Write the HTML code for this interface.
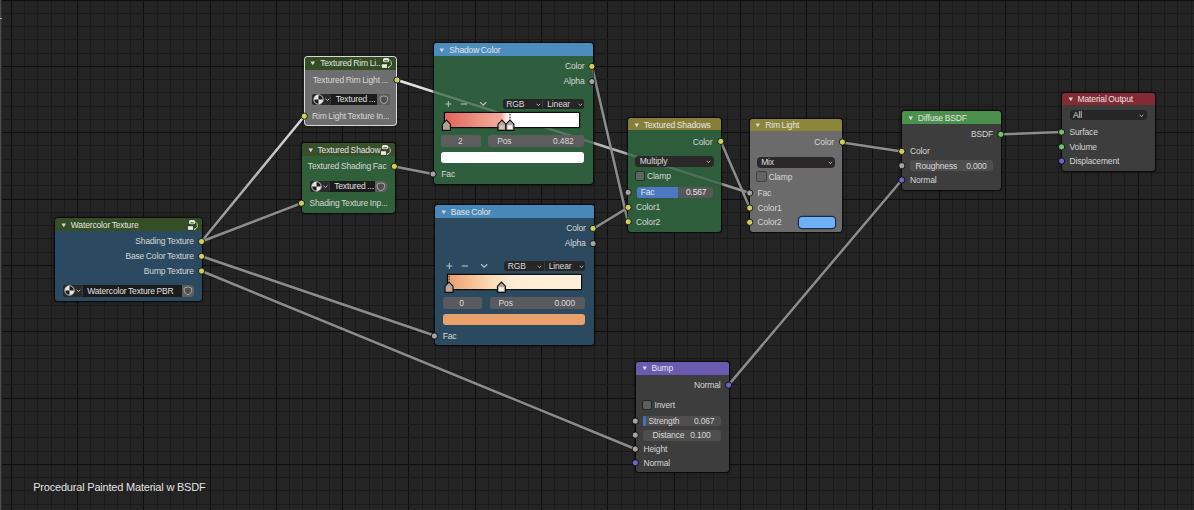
<!DOCTYPE html><html><head><meta charset="utf-8"><style>html,body{margin:0;padding:0;}body{width:1194px;height:510px;overflow:hidden;background:#242424;position:relative;font-family:"Liberation Sans", sans-serif;}</style></head><body>
<svg width="1194" height="510" style="position:absolute;left:0;top:0"><line x1="11.5" y1="0" x2="11.5" y2="510" stroke="#0e0e0e" stroke-width="1"/><line x1="24.5" y1="0" x2="24.5" y2="510" stroke="#1a1a1a" stroke-width="1"/><line x1="37.5" y1="0" x2="37.5" y2="510" stroke="#1a1a1a" stroke-width="1"/><line x1="51.5" y1="0" x2="51.5" y2="510" stroke="#1a1a1a" stroke-width="1"/><line x1="64.5" y1="0" x2="64.5" y2="510" stroke="#1a1a1a" stroke-width="1"/><line x1="77.5" y1="0" x2="77.5" y2="510" stroke="#0e0e0e" stroke-width="1"/><line x1="90.5" y1="0" x2="90.5" y2="510" stroke="#1a1a1a" stroke-width="1"/><line x1="104.5" y1="0" x2="104.5" y2="510" stroke="#1a1a1a" stroke-width="1"/><line x1="117.5" y1="0" x2="117.5" y2="510" stroke="#1a1a1a" stroke-width="1"/><line x1="130.5" y1="0" x2="130.5" y2="510" stroke="#1a1a1a" stroke-width="1"/><line x1="143.5" y1="0" x2="143.5" y2="510" stroke="#0e0e0e" stroke-width="1"/><line x1="157.5" y1="0" x2="157.5" y2="510" stroke="#1a1a1a" stroke-width="1"/><line x1="170.5" y1="0" x2="170.5" y2="510" stroke="#1a1a1a" stroke-width="1"/><line x1="183.5" y1="0" x2="183.5" y2="510" stroke="#1a1a1a" stroke-width="1"/><line x1="196.5" y1="0" x2="196.5" y2="510" stroke="#1a1a1a" stroke-width="1"/><line x1="210.5" y1="0" x2="210.5" y2="510" stroke="#0e0e0e" stroke-width="1"/><line x1="223.5" y1="0" x2="223.5" y2="510" stroke="#1a1a1a" stroke-width="1"/><line x1="236.5" y1="0" x2="236.5" y2="510" stroke="#1a1a1a" stroke-width="1"/><line x1="249.5" y1="0" x2="249.5" y2="510" stroke="#1a1a1a" stroke-width="1"/><line x1="263.5" y1="0" x2="263.5" y2="510" stroke="#1a1a1a" stroke-width="1"/><line x1="276.5" y1="0" x2="276.5" y2="510" stroke="#0e0e0e" stroke-width="1"/><line x1="289.5" y1="0" x2="289.5" y2="510" stroke="#1a1a1a" stroke-width="1"/><line x1="302.5" y1="0" x2="302.5" y2="510" stroke="#1a1a1a" stroke-width="1"/><line x1="316.5" y1="0" x2="316.5" y2="510" stroke="#1a1a1a" stroke-width="1"/><line x1="329.5" y1="0" x2="329.5" y2="510" stroke="#1a1a1a" stroke-width="1"/><line x1="342.5" y1="0" x2="342.5" y2="510" stroke="#0e0e0e" stroke-width="1"/><line x1="355.5" y1="0" x2="355.5" y2="510" stroke="#1a1a1a" stroke-width="1"/><line x1="369.5" y1="0" x2="369.5" y2="510" stroke="#1a1a1a" stroke-width="1"/><line x1="382.5" y1="0" x2="382.5" y2="510" stroke="#1a1a1a" stroke-width="1"/><line x1="395.5" y1="0" x2="395.5" y2="510" stroke="#1a1a1a" stroke-width="1"/><line x1="408.5" y1="0" x2="408.5" y2="510" stroke="#0e0e0e" stroke-width="1"/><line x1="422.5" y1="0" x2="422.5" y2="510" stroke="#1a1a1a" stroke-width="1"/><line x1="435.5" y1="0" x2="435.5" y2="510" stroke="#1a1a1a" stroke-width="1"/><line x1="448.5" y1="0" x2="448.5" y2="510" stroke="#1a1a1a" stroke-width="1"/><line x1="462.5" y1="0" x2="462.5" y2="510" stroke="#1a1a1a" stroke-width="1"/><line x1="475.5" y1="0" x2="475.5" y2="510" stroke="#0e0e0e" stroke-width="1"/><line x1="488.5" y1="0" x2="488.5" y2="510" stroke="#1a1a1a" stroke-width="1"/><line x1="501.5" y1="0" x2="501.5" y2="510" stroke="#1a1a1a" stroke-width="1"/><line x1="515.5" y1="0" x2="515.5" y2="510" stroke="#1a1a1a" stroke-width="1"/><line x1="528.5" y1="0" x2="528.5" y2="510" stroke="#1a1a1a" stroke-width="1"/><line x1="541.5" y1="0" x2="541.5" y2="510" stroke="#0e0e0e" stroke-width="1"/><line x1="554.5" y1="0" x2="554.5" y2="510" stroke="#1a1a1a" stroke-width="1"/><line x1="568.5" y1="0" x2="568.5" y2="510" stroke="#1a1a1a" stroke-width="1"/><line x1="581.5" y1="0" x2="581.5" y2="510" stroke="#1a1a1a" stroke-width="1"/><line x1="594.5" y1="0" x2="594.5" y2="510" stroke="#1a1a1a" stroke-width="1"/><line x1="607.5" y1="0" x2="607.5" y2="510" stroke="#0e0e0e" stroke-width="1"/><line x1="621.5" y1="0" x2="621.5" y2="510" stroke="#1a1a1a" stroke-width="1"/><line x1="634.5" y1="0" x2="634.5" y2="510" stroke="#1a1a1a" stroke-width="1"/><line x1="647.5" y1="0" x2="647.5" y2="510" stroke="#1a1a1a" stroke-width="1"/><line x1="660.5" y1="0" x2="660.5" y2="510" stroke="#1a1a1a" stroke-width="1"/><line x1="674.5" y1="0" x2="674.5" y2="510" stroke="#0e0e0e" stroke-width="1"/><line x1="687.5" y1="0" x2="687.5" y2="510" stroke="#1a1a1a" stroke-width="1"/><line x1="700.5" y1="0" x2="700.5" y2="510" stroke="#1a1a1a" stroke-width="1"/><line x1="713.5" y1="0" x2="713.5" y2="510" stroke="#1a1a1a" stroke-width="1"/><line x1="727.5" y1="0" x2="727.5" y2="510" stroke="#1a1a1a" stroke-width="1"/><line x1="740.5" y1="0" x2="740.5" y2="510" stroke="#0e0e0e" stroke-width="1"/><line x1="753.5" y1="0" x2="753.5" y2="510" stroke="#1a1a1a" stroke-width="1"/><line x1="766.5" y1="0" x2="766.5" y2="510" stroke="#1a1a1a" stroke-width="1"/><line x1="780.5" y1="0" x2="780.5" y2="510" stroke="#1a1a1a" stroke-width="1"/><line x1="793.5" y1="0" x2="793.5" y2="510" stroke="#1a1a1a" stroke-width="1"/><line x1="806.5" y1="0" x2="806.5" y2="510" stroke="#0e0e0e" stroke-width="1"/><line x1="819.5" y1="0" x2="819.5" y2="510" stroke="#1a1a1a" stroke-width="1"/><line x1="833.5" y1="0" x2="833.5" y2="510" stroke="#1a1a1a" stroke-width="1"/><line x1="846.5" y1="0" x2="846.5" y2="510" stroke="#1a1a1a" stroke-width="1"/><line x1="859.5" y1="0" x2="859.5" y2="510" stroke="#1a1a1a" stroke-width="1"/><line x1="872.5" y1="0" x2="872.5" y2="510" stroke="#0e0e0e" stroke-width="1"/><line x1="886.5" y1="0" x2="886.5" y2="510" stroke="#1a1a1a" stroke-width="1"/><line x1="899.5" y1="0" x2="899.5" y2="510" stroke="#1a1a1a" stroke-width="1"/><line x1="912.5" y1="0" x2="912.5" y2="510" stroke="#1a1a1a" stroke-width="1"/><line x1="925.5" y1="0" x2="925.5" y2="510" stroke="#1a1a1a" stroke-width="1"/><line x1="939.5" y1="0" x2="939.5" y2="510" stroke="#0e0e0e" stroke-width="1"/><line x1="952.5" y1="0" x2="952.5" y2="510" stroke="#1a1a1a" stroke-width="1"/><line x1="965.5" y1="0" x2="965.5" y2="510" stroke="#1a1a1a" stroke-width="1"/><line x1="978.5" y1="0" x2="978.5" y2="510" stroke="#1a1a1a" stroke-width="1"/><line x1="992.5" y1="0" x2="992.5" y2="510" stroke="#1a1a1a" stroke-width="1"/><line x1="1005.5" y1="0" x2="1005.5" y2="510" stroke="#0e0e0e" stroke-width="1"/><line x1="1018.5" y1="0" x2="1018.5" y2="510" stroke="#1a1a1a" stroke-width="1"/><line x1="1032.5" y1="0" x2="1032.5" y2="510" stroke="#1a1a1a" stroke-width="1"/><line x1="1045.5" y1="0" x2="1045.5" y2="510" stroke="#1a1a1a" stroke-width="1"/><line x1="1058.5" y1="0" x2="1058.5" y2="510" stroke="#1a1a1a" stroke-width="1"/><line x1="1071.5" y1="0" x2="1071.5" y2="510" stroke="#0e0e0e" stroke-width="1"/><line x1="1085.5" y1="0" x2="1085.5" y2="510" stroke="#1a1a1a" stroke-width="1"/><line x1="1098.5" y1="0" x2="1098.5" y2="510" stroke="#1a1a1a" stroke-width="1"/><line x1="1111.5" y1="0" x2="1111.5" y2="510" stroke="#1a1a1a" stroke-width="1"/><line x1="1124.5" y1="0" x2="1124.5" y2="510" stroke="#1a1a1a" stroke-width="1"/><line x1="1138.5" y1="0" x2="1138.5" y2="510" stroke="#0e0e0e" stroke-width="1"/><line x1="1151.5" y1="0" x2="1151.5" y2="510" stroke="#1a1a1a" stroke-width="1"/><line x1="1164.5" y1="0" x2="1164.5" y2="510" stroke="#1a1a1a" stroke-width="1"/><line x1="1177.5" y1="0" x2="1177.5" y2="510" stroke="#1a1a1a" stroke-width="1"/><line x1="1191.5" y1="0" x2="1191.5" y2="510" stroke="#1a1a1a" stroke-width="1"/><line x1="0" y1="0.5" x2="1194" y2="0.5" stroke="#0e0e0e" stroke-width="1"/><line x1="0" y1="13.5" x2="1194" y2="13.5" stroke="#1a1a1a" stroke-width="1"/><line x1="0" y1="26.5" x2="1194" y2="26.5" stroke="#1a1a1a" stroke-width="1"/><line x1="0" y1="39.5" x2="1194" y2="39.5" stroke="#1a1a1a" stroke-width="1"/><line x1="0" y1="53.5" x2="1194" y2="53.5" stroke="#1a1a1a" stroke-width="1"/><line x1="0" y1="66.5" x2="1194" y2="66.5" stroke="#0e0e0e" stroke-width="1"/><line x1="0" y1="79.5" x2="1194" y2="79.5" stroke="#1a1a1a" stroke-width="1"/><line x1="0" y1="92.5" x2="1194" y2="92.5" stroke="#1a1a1a" stroke-width="1"/><line x1="0" y1="106.5" x2="1194" y2="106.5" stroke="#1a1a1a" stroke-width="1"/><line x1="0" y1="119.5" x2="1194" y2="119.5" stroke="#1a1a1a" stroke-width="1"/><line x1="0" y1="132.5" x2="1194" y2="132.5" stroke="#0e0e0e" stroke-width="1"/><line x1="0" y1="145.5" x2="1194" y2="145.5" stroke="#1a1a1a" stroke-width="1"/><line x1="0" y1="159.5" x2="1194" y2="159.5" stroke="#1a1a1a" stroke-width="1"/><line x1="0" y1="172.5" x2="1194" y2="172.5" stroke="#1a1a1a" stroke-width="1"/><line x1="0" y1="185.5" x2="1194" y2="185.5" stroke="#1a1a1a" stroke-width="1"/><line x1="0" y1="199.5" x2="1194" y2="199.5" stroke="#0e0e0e" stroke-width="1"/><line x1="0" y1="212.5" x2="1194" y2="212.5" stroke="#1a1a1a" stroke-width="1"/><line x1="0" y1="225.5" x2="1194" y2="225.5" stroke="#1a1a1a" stroke-width="1"/><line x1="0" y1="238.5" x2="1194" y2="238.5" stroke="#1a1a1a" stroke-width="1"/><line x1="0" y1="252.5" x2="1194" y2="252.5" stroke="#1a1a1a" stroke-width="1"/><line x1="0" y1="265.5" x2="1194" y2="265.5" stroke="#0e0e0e" stroke-width="1"/><line x1="0" y1="278.5" x2="1194" y2="278.5" stroke="#1a1a1a" stroke-width="1"/><line x1="0" y1="291.5" x2="1194" y2="291.5" stroke="#1a1a1a" stroke-width="1"/><line x1="0" y1="305.5" x2="1194" y2="305.5" stroke="#1a1a1a" stroke-width="1"/><line x1="0" y1="318.5" x2="1194" y2="318.5" stroke="#1a1a1a" stroke-width="1"/><line x1="0" y1="331.5" x2="1194" y2="331.5" stroke="#0e0e0e" stroke-width="1"/><line x1="0" y1="345.5" x2="1194" y2="345.5" stroke="#1a1a1a" stroke-width="1"/><line x1="0" y1="358.5" x2="1194" y2="358.5" stroke="#1a1a1a" stroke-width="1"/><line x1="0" y1="371.5" x2="1194" y2="371.5" stroke="#1a1a1a" stroke-width="1"/><line x1="0" y1="384.5" x2="1194" y2="384.5" stroke="#1a1a1a" stroke-width="1"/><line x1="0" y1="398.5" x2="1194" y2="398.5" stroke="#0e0e0e" stroke-width="1"/><line x1="0" y1="411.5" x2="1194" y2="411.5" stroke="#1a1a1a" stroke-width="1"/><line x1="0" y1="424.5" x2="1194" y2="424.5" stroke="#1a1a1a" stroke-width="1"/><line x1="0" y1="437.5" x2="1194" y2="437.5" stroke="#1a1a1a" stroke-width="1"/><line x1="0" y1="451.5" x2="1194" y2="451.5" stroke="#1a1a1a" stroke-width="1"/><line x1="0" y1="464.5" x2="1194" y2="464.5" stroke="#0e0e0e" stroke-width="1"/><line x1="0" y1="477.5" x2="1194" y2="477.5" stroke="#1a1a1a" stroke-width="1"/><line x1="0" y1="490.5" x2="1194" y2="490.5" stroke="#1a1a1a" stroke-width="1"/><line x1="0" y1="504.5" x2="1194" y2="504.5" stroke="#1a1a1a" stroke-width="1"/></svg>
<div style="position:absolute;left:0px;top:0px;width:1px;height:510px;background:#4c4c4c;border-radius:0px;"></div>
<div style="position:absolute;left:1px;top:0px;width:1px;height:510px;background:#2e2e2e;border-radius:0px;"></div>
<div style="position:absolute;left:0px;top:17.8px;width:1.8px;height:1.6px;background:#a8a8a8;border-radius:0px;"></div>
<svg width="1194" height="510" style="position:absolute;left:0;top:0;opacity:1.0"><defs><linearGradient id="lg1" gradientUnits="userSpaceOnUse" x1="201.5" y1="241.5" x2="304.3" y2="116.2"><stop offset="0" stop-color="#8c8c8c"/><stop offset="1" stop-color="#dcdcdc"/></linearGradient><linearGradient id="lg2" gradientUnits="userSpaceOnUse" x1="397.0" y1="80.0" x2="749.7" y2="193.0"><stop offset="0" stop-color="#e6e6e6"/><stop offset="1" stop-color="#909090"/></linearGradient></defs><line x1="201.5" y1="241.5" x2="304.3" y2="116.2" stroke="#161616" stroke-opacity="0.5" stroke-width="3.6" stroke-linecap="round"/><line x1="201.5" y1="241.5" x2="301.5" y2="203.2" stroke="#161616" stroke-opacity="0.5" stroke-width="3.6" stroke-linecap="round"/><line x1="201.5" y1="256.3" x2="435.0" y2="335.8" stroke="#161616" stroke-opacity="0.5" stroke-width="3.6" stroke-linecap="round"/><line x1="201.5" y1="271.0" x2="635.3" y2="449.0" stroke="#161616" stroke-opacity="0.5" stroke-width="3.6" stroke-linecap="round"/><line x1="397.0" y1="80.0" x2="749.7" y2="193.0" stroke="#161616" stroke-opacity="0.5" stroke-width="3.6" stroke-linecap="round"/><line x1="394.3" y1="166.4" x2="433.0" y2="174.0" stroke="#161616" stroke-opacity="0.5" stroke-width="3.6" stroke-linecap="round"/><line x1="592.0" y1="66.5" x2="627.9" y2="221.8" stroke="#161616" stroke-opacity="0.5" stroke-width="3.6" stroke-linecap="round"/><line x1="594.1" y1="228.2" x2="627.9" y2="207.6" stroke="#161616" stroke-opacity="0.5" stroke-width="3.6" stroke-linecap="round"/><line x1="720.7" y1="141.2" x2="749.7" y2="207.8" stroke="#161616" stroke-opacity="0.5" stroke-width="3.6" stroke-linecap="round"/><line x1="842.4" y1="142.4" x2="901.8" y2="151.4" stroke="#161616" stroke-opacity="0.5" stroke-width="3.6" stroke-linecap="round"/><line x1="1000.8" y1="134.3" x2="1061.6" y2="132.1" stroke="#161616" stroke-opacity="0.5" stroke-width="3.6" stroke-linecap="round"/><line x1="728.4" y1="385.1" x2="901.8" y2="180.0" stroke="#161616" stroke-opacity="0.5" stroke-width="3.6" stroke-linecap="round"/><line x1="201.5" y1="241.5" x2="304.3" y2="116.2" stroke="url(#lg1)" stroke-width="2.5" stroke-linecap="round"/><line x1="201.5" y1="241.5" x2="301.5" y2="203.2" stroke="#8c8c8c" stroke-width="2.5" stroke-linecap="round"/><line x1="201.5" y1="256.3" x2="435.0" y2="335.8" stroke="#8c8c8c" stroke-width="2.5" stroke-linecap="round"/><line x1="201.5" y1="271.0" x2="635.3" y2="449.0" stroke="#8c8c8c" stroke-width="2.5" stroke-linecap="round"/><line x1="397.0" y1="80.0" x2="749.7" y2="193.0" stroke="url(#lg2)" stroke-width="2.5" stroke-linecap="round"/><line x1="394.3" y1="166.4" x2="433.0" y2="174.0" stroke="#8c8c8c" stroke-width="2.5" stroke-linecap="round"/><line x1="592.0" y1="66.5" x2="627.9" y2="221.8" stroke="#8c8c8c" stroke-width="2.5" stroke-linecap="round"/><line x1="594.1" y1="228.2" x2="627.9" y2="207.6" stroke="#8c8c8c" stroke-width="2.5" stroke-linecap="round"/><line x1="720.7" y1="141.2" x2="749.7" y2="207.8" stroke="#8c8c8c" stroke-width="2.5" stroke-linecap="round"/><line x1="842.4" y1="142.4" x2="901.8" y2="151.4" stroke="#8c8c8c" stroke-width="2.5" stroke-linecap="round"/><line x1="1000.8" y1="134.3" x2="1061.6" y2="132.1" stroke="#8c8c8c" stroke-width="2.5" stroke-linecap="round"/><line x1="728.4" y1="385.1" x2="901.8" y2="180.0" stroke="#8c8c8c" stroke-width="2.5" stroke-linecap="round"/></svg>
<div style="position:absolute;left:55.3px;top:218.2px;width:146.7px;height:82.4px;border-radius:3px;overflow:hidden;background:#2b4a61;box-shadow:0 0 0 1px rgba(0,0,0,0.55),0 0 3px 1px rgba(0,0,0,0.4);"><div style="position:absolute;left:0;top:0;right:0;height:12.8px;background:#354e26;"></div></div>
<div style="position:absolute;left:304.7px;top:56.6px;width:91.5px;height:68.7px;border-radius:3px;overflow:hidden;background:#6e6e6e;box-shadow:0 0 0 1px #d8d8d8,0 0 3px 1px rgba(0,0,0,0.45);"><div style="position:absolute;left:0;top:0;right:0;height:13px;background:#344d25;"></div></div>
<div style="position:absolute;left:302px;top:143.2px;width:93px;height:69.4px;border-radius:3px;overflow:hidden;background:#2f6039;box-shadow:0 0 0 1px rgba(0,0,0,0.55),0 0 3px 1px rgba(0,0,0,0.4);"><div style="position:absolute;left:0;top:0;right:0;height:12.8px;background:#384f2a;"></div></div>
<div style="position:absolute;left:433.8px;top:43.2px;width:159.2px;height:140.4px;border-radius:3px;overflow:hidden;background:#2e5e3d;box-shadow:0 0 0 1px rgba(0,0,0,0.55),0 0 3px 1px rgba(0,0,0,0.4);"><div style="position:absolute;left:0;top:0;right:0;height:12.6px;background:#4d8dbe;"></div></div>
<div style="position:absolute;left:435.2px;top:205.2px;width:159px;height:140.2px;border-radius:3px;overflow:hidden;background:#2c4a5f;box-shadow:0 0 0 1px rgba(0,0,0,0.55),0 0 3px 1px rgba(0,0,0,0.4);"><div style="position:absolute;left:0;top:0;right:0;height:12.8px;background:#4888b9;"></div></div>
<div style="position:absolute;left:628.2px;top:118.3px;width:92.6px;height:113.3px;border-radius:3px;overflow:hidden;background:#2e5d3b;box-shadow:0 0 0 1px rgba(0,0,0,0.55),0 0 3px 1px rgba(0,0,0,0.4);"><div style="position:absolute;left:0;top:0;right:0;height:12.2px;background:#877f38;"></div></div>
<div style="position:absolute;left:749.7px;top:118.9px;width:92.7px;height:112.9px;border-radius:3px;overflow:hidden;background:#6b6b6b;box-shadow:0 0 0 1px rgba(0,0,0,0.55),0 0 3px 1px rgba(0,0,0,0.4);"><div style="position:absolute;left:0;top:0;right:0;height:12.2px;background:#8c8438;"></div></div>
<div style="position:absolute;left:902.2px;top:111.2px;width:98.8px;height:78.6px;border-radius:3px;overflow:hidden;background:#3d3d3d;box-shadow:0 0 0 1px rgba(0,0,0,0.55),0 0 3px 1px rgba(0,0,0,0.4);"><div style="position:absolute;left:0;top:0;right:0;height:12.7px;background:#4b904d;"></div></div>
<div style="position:absolute;left:1062.1px;top:92.5px;width:92.8px;height:78.6px;border-radius:3px;overflow:hidden;background:#3d3d3d;box-shadow:0 0 0 1px rgba(0,0,0,0.55),0 0 3px 1px rgba(0,0,0,0.4);"><div style="position:absolute;left:0;top:0;right:0;height:12.6px;background:#842a33;"></div></div>
<div style="position:absolute;left:636px;top:361.9px;width:93.1px;height:110.2px;border-radius:3px;overflow:hidden;background:#3d3d3d;box-shadow:0 0 0 1px rgba(0,0,0,0.55),0 0 3px 1px rgba(0,0,0,0.4);"><div style="position:absolute;left:0;top:0;right:0;height:12.7px;background:#6a5bb0;"></div></div>
<svg width="1194" height="510" style="position:absolute;left:0;top:0;opacity:0.28"><defs><linearGradient id="lg3" gradientUnits="userSpaceOnUse" x1="201.5" y1="241.5" x2="304.3" y2="116.2"><stop offset="0" stop-color="#8c8c8c"/><stop offset="1" stop-color="#dcdcdc"/></linearGradient><linearGradient id="lg4" gradientUnits="userSpaceOnUse" x1="397.0" y1="80.0" x2="749.7" y2="193.0"><stop offset="0" stop-color="#e6e6e6"/><stop offset="1" stop-color="#909090"/></linearGradient></defs><line x1="201.5" y1="241.5" x2="304.3" y2="116.2" stroke="#161616" stroke-opacity="0.5" stroke-width="3.6" stroke-linecap="round"/><line x1="201.5" y1="241.5" x2="301.5" y2="203.2" stroke="#161616" stroke-opacity="0.5" stroke-width="3.6" stroke-linecap="round"/><line x1="201.5" y1="256.3" x2="435.0" y2="335.8" stroke="#161616" stroke-opacity="0.5" stroke-width="3.6" stroke-linecap="round"/><line x1="201.5" y1="271.0" x2="635.3" y2="449.0" stroke="#161616" stroke-opacity="0.5" stroke-width="3.6" stroke-linecap="round"/><line x1="397.0" y1="80.0" x2="749.7" y2="193.0" stroke="#161616" stroke-opacity="0.5" stroke-width="3.6" stroke-linecap="round"/><line x1="394.3" y1="166.4" x2="433.0" y2="174.0" stroke="#161616" stroke-opacity="0.5" stroke-width="3.6" stroke-linecap="round"/><line x1="592.0" y1="66.5" x2="627.9" y2="221.8" stroke="#161616" stroke-opacity="0.5" stroke-width="3.6" stroke-linecap="round"/><line x1="594.1" y1="228.2" x2="627.9" y2="207.6" stroke="#161616" stroke-opacity="0.5" stroke-width="3.6" stroke-linecap="round"/><line x1="720.7" y1="141.2" x2="749.7" y2="207.8" stroke="#161616" stroke-opacity="0.5" stroke-width="3.6" stroke-linecap="round"/><line x1="842.4" y1="142.4" x2="901.8" y2="151.4" stroke="#161616" stroke-opacity="0.5" stroke-width="3.6" stroke-linecap="round"/><line x1="1000.8" y1="134.3" x2="1061.6" y2="132.1" stroke="#161616" stroke-opacity="0.5" stroke-width="3.6" stroke-linecap="round"/><line x1="728.4" y1="385.1" x2="901.8" y2="180.0" stroke="#161616" stroke-opacity="0.5" stroke-width="3.6" stroke-linecap="round"/><line x1="201.5" y1="241.5" x2="304.3" y2="116.2" stroke="url(#lg3)" stroke-width="2.5" stroke-linecap="round"/><line x1="201.5" y1="241.5" x2="301.5" y2="203.2" stroke="#8c8c8c" stroke-width="2.5" stroke-linecap="round"/><line x1="201.5" y1="256.3" x2="435.0" y2="335.8" stroke="#8c8c8c" stroke-width="2.5" stroke-linecap="round"/><line x1="201.5" y1="271.0" x2="635.3" y2="449.0" stroke="#8c8c8c" stroke-width="2.5" stroke-linecap="round"/><line x1="397.0" y1="80.0" x2="749.7" y2="193.0" stroke="url(#lg4)" stroke-width="2.5" stroke-linecap="round"/><line x1="394.3" y1="166.4" x2="433.0" y2="174.0" stroke="#8c8c8c" stroke-width="2.5" stroke-linecap="round"/><line x1="592.0" y1="66.5" x2="627.9" y2="221.8" stroke="#8c8c8c" stroke-width="2.5" stroke-linecap="round"/><line x1="594.1" y1="228.2" x2="627.9" y2="207.6" stroke="#8c8c8c" stroke-width="2.5" stroke-linecap="round"/><line x1="720.7" y1="141.2" x2="749.7" y2="207.8" stroke="#8c8c8c" stroke-width="2.5" stroke-linecap="round"/><line x1="842.4" y1="142.4" x2="901.8" y2="151.4" stroke="#8c8c8c" stroke-width="2.5" stroke-linecap="round"/><line x1="1000.8" y1="134.3" x2="1061.6" y2="132.1" stroke="#8c8c8c" stroke-width="2.5" stroke-linecap="round"/><line x1="728.4" y1="385.1" x2="901.8" y2="180.0" stroke="#8c8c8c" stroke-width="2.5" stroke-linecap="round"/></svg>
<svg style="position:absolute;left:60.8px;top:222.5px" width="6" height="5"><path d="M0.5 0.5 L5 0.5 L2.75 4.2 Z" fill="#d8d8d8"/></svg>
<div style="position:absolute;left:70.8px;top:218.5px;height:12px;line-height:12px;font-size:8.5px;letter-spacing:-0.15px;word-spacing:-0.5px;color:#e4e4e4;white-space:nowrap;">Watercolor Texture</div>
<svg style="position:absolute;left:187px;top:219px" width="13" height="13"><g stroke="#1c2418" stroke-width="1.4" stroke-opacity="0.55" fill="none"><rect x="1.9" y="1.1" width="6.3" height="4.1" rx="1.6"/><rect x="0.9" y="7.2" width="5.1" height="3.7"/><path d="M8.2 2.4 Q10.9 4.4 10.4 7.6 Q9.8 9.6 7.4 10.2"/></g><rect x="1.9" y="1.1" width="6.3" height="4.1" rx="1.6" fill="#e2ead8"/><rect x="3.3" y="3.4" width="3.5" height="0.9" fill="#2a3326"/><rect x="0.9" y="7.2" width="5.1" height="3.7" fill="#e2ead8"/><path d="M8.2 2.4 Q10.9 4.4 10.4 7.6 Q9.8 9.6 7.4 10.2" stroke="#dfe6d6" stroke-width="0.9" fill="none"/><path d="M6.8 9.2 L8.4 10.3 L7 11.2 Z" fill="#dfe6d6"/></svg>
<svg style="position:absolute;left:310.2px;top:60.9px" width="6" height="5"><path d="M0.5 0.5 L5 0.5 L2.75 4.2 Z" fill="#d8d8d8"/></svg>
<div style="position:absolute;left:320.2px;top:56.9px;height:12px;line-height:12px;font-size:8.5px;letter-spacing:-0.15px;word-spacing:-0.5px;color:#e4e4e4;white-space:nowrap;">Textured Rim Li...</div>
<svg style="position:absolute;left:381.2px;top:57.4px" width="13" height="13"><g stroke="#1c2418" stroke-width="1.4" stroke-opacity="0.55" fill="none"><rect x="1.9" y="1.1" width="6.3" height="4.1" rx="1.6"/><rect x="0.9" y="7.2" width="5.1" height="3.7"/><path d="M8.2 2.4 Q10.9 4.4 10.4 7.6 Q9.8 9.6 7.4 10.2"/></g><rect x="1.9" y="1.1" width="6.3" height="4.1" rx="1.6" fill="#e2ead8"/><rect x="3.3" y="3.4" width="3.5" height="0.9" fill="#2a3326"/><rect x="0.9" y="7.2" width="5.1" height="3.7" fill="#e2ead8"/><path d="M8.2 2.4 Q10.9 4.4 10.4 7.6 Q9.8 9.6 7.4 10.2" stroke="#dfe6d6" stroke-width="0.9" fill="none"/><path d="M6.8 9.2 L8.4 10.3 L7 11.2 Z" fill="#dfe6d6"/></svg>
<svg style="position:absolute;left:307.5px;top:147.5px" width="6" height="5"><path d="M0.5 0.5 L5 0.5 L2.75 4.2 Z" fill="#d8d8d8"/></svg>
<div style="position:absolute;left:317.5px;top:143.5px;height:12px;line-height:12px;font-size:8.5px;letter-spacing:-0.15px;word-spacing:-0.5px;color:#e4e4e4;white-space:nowrap;">Textured Shadow</div>
<svg style="position:absolute;left:380px;top:144px" width="13" height="13"><g stroke="#1c2418" stroke-width="1.4" stroke-opacity="0.55" fill="none"><rect x="1.9" y="1.1" width="6.3" height="4.1" rx="1.6"/><rect x="0.9" y="7.2" width="5.1" height="3.7"/><path d="M8.2 2.4 Q10.9 4.4 10.4 7.6 Q9.8 9.6 7.4 10.2"/></g><rect x="1.9" y="1.1" width="6.3" height="4.1" rx="1.6" fill="#e2ead8"/><rect x="3.3" y="3.4" width="3.5" height="0.9" fill="#2a3326"/><rect x="0.9" y="7.2" width="5.1" height="3.7" fill="#e2ead8"/><path d="M8.2 2.4 Q10.9 4.4 10.4 7.6 Q9.8 9.6 7.4 10.2" stroke="#dfe6d6" stroke-width="0.9" fill="none"/><path d="M6.8 9.2 L8.4 10.3 L7 11.2 Z" fill="#dfe6d6"/></svg>
<svg style="position:absolute;left:439.3px;top:47.5px" width="6" height="5"><path d="M0.5 0.5 L5 0.5 L2.75 4.2 Z" fill="#d8d8d8"/></svg>
<div style="position:absolute;left:449.3px;top:43.5px;height:12px;line-height:12px;font-size:8.5px;letter-spacing:-0.15px;word-spacing:-0.5px;color:#e4e4e4;white-space:nowrap;">Shadow Color</div>
<svg style="position:absolute;left:440.7px;top:209.5px" width="6" height="5"><path d="M0.5 0.5 L5 0.5 L2.75 4.2 Z" fill="#d8d8d8"/></svg>
<div style="position:absolute;left:450.7px;top:205.5px;height:12px;line-height:12px;font-size:8.5px;letter-spacing:-0.15px;word-spacing:-0.5px;color:#e4e4e4;white-space:nowrap;">Base Color</div>
<svg style="position:absolute;left:633.7px;top:122.6px" width="6" height="5"><path d="M0.5 0.5 L5 0.5 L2.75 4.2 Z" fill="#d8d8d8"/></svg>
<div style="position:absolute;left:643.7px;top:118.6px;height:12px;line-height:12px;font-size:8.5px;letter-spacing:-0.15px;word-spacing:-0.5px;color:#e4e4e4;white-space:nowrap;">Textured Shadows</div>
<svg style="position:absolute;left:755.2px;top:123.2px" width="6" height="5"><path d="M0.5 0.5 L5 0.5 L2.75 4.2 Z" fill="#d8d8d8"/></svg>
<div style="position:absolute;left:765.2px;top:119.2px;height:12px;line-height:12px;font-size:8.5px;letter-spacing:-0.15px;word-spacing:-0.5px;color:#e4e4e4;white-space:nowrap;">Rim Light</div>
<svg style="position:absolute;left:907.7px;top:115.5px" width="6" height="5"><path d="M0.5 0.5 L5 0.5 L2.75 4.2 Z" fill="#d8d8d8"/></svg>
<div style="position:absolute;left:917.7px;top:111.5px;height:12px;line-height:12px;font-size:8.5px;letter-spacing:-0.15px;word-spacing:-0.5px;color:#e4e4e4;white-space:nowrap;">Diffuse BSDF</div>
<svg style="position:absolute;left:1067.6px;top:96.8px" width="6" height="5"><path d="M0.5 0.5 L5 0.5 L2.75 4.2 Z" fill="#d8d8d8"/></svg>
<div style="position:absolute;left:1077.6px;top:92.8px;height:12px;line-height:12px;font-size:8.5px;letter-spacing:-0.15px;word-spacing:-0.5px;color:#e4e4e4;white-space:nowrap;">Material Output</div>
<svg style="position:absolute;left:641.5px;top:366.2px" width="6" height="5"><path d="M0.5 0.5 L5 0.5 L2.75 4.2 Z" fill="#d8d8d8"/></svg>
<div style="position:absolute;left:651.5px;top:362.2px;height:12px;line-height:12px;font-size:8.5px;letter-spacing:-0.15px;word-spacing:-0.5px;color:#e4e4e4;white-space:nowrap;">Bump</div>
<div style="position:absolute;right:1000.2px;top:235.3px;height:12px;line-height:12px;font-size:8.5px;letter-spacing:-0.15px;word-spacing:-0.5px;color:#d6d6d6;white-space:nowrap;">Shading Texture</div>
<div style="position:absolute;right:1000.2px;top:250px;height:12px;line-height:12px;font-size:8.5px;letter-spacing:-0.15px;word-spacing:-0.5px;color:#d6d6d6;white-space:nowrap;">Base Color Texture</div>
<div style="position:absolute;right:1000.2px;top:264.7px;height:12px;line-height:12px;font-size:8.5px;letter-spacing:-0.15px;word-spacing:-0.5px;color:#d6d6d6;white-space:nowrap;">Bump Texture</div>
<div style="position:absolute;left:63px;top:285px;width:131px;height:11.8px;background:#1b1b1b;border-radius:3px;"></div>
<div style="position:absolute;left:63px;top:285px;width:18.8px;height:11.8px;background:#2a2a2a;border-radius:3px;border-radius:3px 0 0 3px;"></div>
<div style="position:absolute;left:81.8px;top:285.5px;width:0.7px;height:10.8px;background:#3a3a3a;border-radius:0px;"></div>
<div style="position:absolute;left:181.8px;top:285px;width:12.2px;height:11.8px;background:#5e5e5e;border-radius:3px;border-radius:0 3px 3px 0;"></div>
<svg style="position:absolute;left:64px;top:285.4px" width="18" height="11"><circle cx="5.5" cy="5.5" r="4.7" fill="#e6e6e6"/><path d="M5.5 5.5 L5.5 0.8 A4.7 4.7 0 0 1 10.2 5.5 Z" fill="#1c1c1c"/><path d="M5.5 5.5 L0.8 5.5 A4.7 4.7 0 0 0 5.5 10.2 Z" fill="#1c1c1c"/><circle cx="5.5" cy="5.5" r="4.7" fill="none" stroke="#d8d8d8" stroke-width="0.8"/><path d="M12.4 4.6 L14.4 6.6 L16.4 4.6" stroke="#c8c8c8" stroke-width="0.9" fill="none"/></svg>
<div style="position:absolute;left:87.2px;top:284.7px;height:12px;line-height:12px;font-size:8.5px;letter-spacing:-0.15px;word-spacing:-0.5px;color:#e0e0e0;white-space:nowrap;">Watercolor Texture PBR</div>
<svg style="position:absolute;left:183.2px;top:286.1px" width="10" height="10"><path d="M4.9 0.9 L8.6 2.1 L8.6 4.8 Q8.2 7.8 4.9 8.9 Q1.6 7.8 1.2 4.8 L1.2 2.1 Z" fill="#505050" stroke="#b8b8b8" stroke-width="0.8"/></svg>
<div style="position:absolute;right:805.8px;top:74px;height:12px;line-height:12px;font-size:8.5px;letter-spacing:-0.15px;word-spacing:-0.5px;color:#d6d6d6;white-space:nowrap;">Textured Rim Light ...</div>
<div style="position:absolute;left:311.5px;top:94px;width:78.1px;height:10.6px;background:#1b1b1b;border-radius:3px;"></div>
<div style="position:absolute;left:311.5px;top:94px;width:18.8px;height:10.6px;background:#2a2a2a;border-radius:3px;border-radius:3px 0 0 3px;"></div>
<div style="position:absolute;left:330.3px;top:94.5px;width:0.7px;height:9.6px;background:#3a3a3a;border-radius:0px;"></div>
<div style="position:absolute;left:377.4px;top:94px;width:12.2px;height:10.6px;background:#5e5e5e;border-radius:3px;border-radius:0 3px 3px 0;"></div>
<svg style="position:absolute;left:312.5px;top:93.8px" width="18" height="11"><circle cx="5.5" cy="5.5" r="4.7" fill="#e6e6e6"/><path d="M5.5 5.5 L5.5 0.8 A4.7 4.7 0 0 1 10.2 5.5 Z" fill="#1c1c1c"/><path d="M5.5 5.5 L0.8 5.5 A4.7 4.7 0 0 0 5.5 10.2 Z" fill="#1c1c1c"/><circle cx="5.5" cy="5.5" r="4.7" fill="none" stroke="#d8d8d8" stroke-width="0.8"/><path d="M12.4 4.6 L14.4 6.6 L16.4 4.6" stroke="#c8c8c8" stroke-width="0.9" fill="none"/></svg>
<div style="position:absolute;left:335.7px;top:93.1px;height:12px;line-height:12px;font-size:8.5px;letter-spacing:-0.15px;word-spacing:-0.5px;color:#e0e0e0;white-space:nowrap;">Textured ...</div>
<svg style="position:absolute;left:378.8px;top:94.5px" width="10" height="10"><path d="M4.9 0.9 L8.6 2.1 L8.6 4.8 Q8.2 7.8 4.9 8.9 Q1.6 7.8 1.2 4.8 L1.2 2.1 Z" fill="#505050" stroke="#b8b8b8" stroke-width="0.8"/></svg>
<div style="position:absolute;left:312px;top:110px;height:12px;line-height:12px;font-size:8.5px;letter-spacing:-0.15px;word-spacing:-0.5px;color:#d6d6d6;white-space:nowrap;">Rim Light Texture In...</div>
<div style="position:absolute;right:807.5px;top:160.2px;height:12px;line-height:12px;font-size:8.5px;letter-spacing:-0.15px;word-spacing:-0.5px;color:#d6d6d6;white-space:nowrap;">Textured Shading Fac</div>
<div style="position:absolute;left:310px;top:181.3px;width:76.8px;height:10.3px;background:#1b1b1b;border-radius:3px;"></div>
<div style="position:absolute;left:310px;top:181.3px;width:18.8px;height:10.3px;background:#2a2a2a;border-radius:3px;border-radius:3px 0 0 3px;"></div>
<div style="position:absolute;left:328.8px;top:181.8px;width:0.7px;height:9.3px;background:#3a3a3a;border-radius:0px;"></div>
<div style="position:absolute;left:374.6px;top:181.3px;width:12.2px;height:10.3px;background:#5e5e5e;border-radius:3px;border-radius:0 3px 3px 0;"></div>
<svg style="position:absolute;left:311px;top:180.95px" width="18" height="11"><circle cx="5.5" cy="5.5" r="4.7" fill="#e6e6e6"/><path d="M5.5 5.5 L5.5 0.8 A4.7 4.7 0 0 1 10.2 5.5 Z" fill="#1c1c1c"/><path d="M5.5 5.5 L0.8 5.5 A4.7 4.7 0 0 0 5.5 10.2 Z" fill="#1c1c1c"/><circle cx="5.5" cy="5.5" r="4.7" fill="none" stroke="#d8d8d8" stroke-width="0.8"/><path d="M12.4 4.6 L14.4 6.6 L16.4 4.6" stroke="#c8c8c8" stroke-width="0.9" fill="none"/></svg>
<div style="position:absolute;left:334.2px;top:180.25px;height:12px;line-height:12px;font-size:8.5px;letter-spacing:-0.15px;word-spacing:-0.5px;color:#e0e0e0;white-space:nowrap;">Textured ...</div>
<svg style="position:absolute;left:376px;top:181.65px" width="10" height="10"><path d="M4.9 0.9 L8.6 2.1 L8.6 4.8 Q8.2 7.8 4.9 8.9 Q1.6 7.8 1.2 4.8 L1.2 2.1 Z" fill="#505050" stroke="#b8b8b8" stroke-width="0.8"/></svg>
<div style="position:absolute;left:309.5px;top:197px;height:12px;line-height:12px;font-size:8.5px;letter-spacing:-0.15px;word-spacing:-0.5px;color:#d6d6d6;white-space:nowrap;">Shading Texture Inp...</div>
<div style="position:absolute;right:609.5px;top:60.2px;height:12px;line-height:12px;font-size:8.5px;letter-spacing:-0.15px;word-spacing:-0.5px;color:#d6d6d6;white-space:nowrap;">Color</div>
<div style="position:absolute;right:609.5px;top:75.4px;height:12px;line-height:12px;font-size:8.5px;letter-spacing:-0.15px;word-spacing:-0.5px;color:#d6d6d6;white-space:nowrap;">Alpha</div>
<svg style="position:absolute;left:443.8px;top:100.1px" width="50" height="8"><path d="M1.3 4 H7.3 M4.3 1 V7" stroke="#b4c2c0" stroke-width="1"/><path d="M16.7 4 H23" stroke="#b4c2c0" stroke-width="1.1"/><path d="M36.2 2.2 L39.2 5.2 L42.2 2.2" stroke="#b4c2c0" stroke-width="1.3" fill="none"/></svg>
<div style="position:absolute;left:503px;top:99.2px;width:39.4px;height:10px;background:#262626;border-radius:3px;"></div>
<div style="position:absolute;left:543px;top:99.2px;width:41.1px;height:10px;background:#262626;border-radius:3px;"></div>
<div style="position:absolute;left:538.8px;top:99.2px;width:8px;height:10px;background:#262626;border-radius:0px;"></div>
<div style="position:absolute;left:542.4px;top:99.7px;width:0.6px;height:9px;background:#3a3a3a;border-radius:0px;"></div>
<div style="position:absolute;left:506.3px;top:97.9px;height:12px;line-height:12px;font-size:8.5px;letter-spacing:-0.15px;word-spacing:-0.5px;color:#d8d8d8;white-space:nowrap;">RGB</div>
<div style="position:absolute;left:547.3px;top:97.9px;height:12px;line-height:12px;font-size:8.5px;letter-spacing:-0.15px;word-spacing:-0.5px;color:#d8d8d8;white-space:nowrap;">Linear</div>
<svg style="position:absolute;left:535.8px;top:103.2px" width="5" height="4"><path d="M0.6 0.8 L2.4 2.6 L4.2 0.8" stroke="#cfcfcf" stroke-width="0.8" fill="none"/></svg>
<svg style="position:absolute;left:577.8px;top:103.2px" width="5" height="4"><path d="M0.6 0.8 L2.4 2.6 L4.2 0.8" stroke="#cfcfcf" stroke-width="0.8" fill="none"/></svg>
<div style="position:absolute;left:445.2px;top:113.4px;width:134.3px;height:14px;background:linear-gradient(to right,#e2665c 1.5%,#ef9484 26%,#f5aa9a 42%,#fde6e2 45.5%,#ffffff 48.5%,#ffffff 100%);box-shadow:0 0 0 1.2px #0c0c0c;"></div>
<svg width="1194" height="510" style="position:absolute;left:0;top:0"><path d="M442.4 130.4 L442.4 124.1 L446.4 120 L450.4 124.1 L450.4 130.4 Z" fill="#b0a29e" stroke="#0e0e0e" stroke-width="1.1"/><rect x="443.9" y="125.2" width="5" height="4" fill="#b49f9b"/><path d="M497.93 130.4 L497.93 124.1 L501.93 120 L505.93 124.1 L505.93 130.4 Z" fill="#b0a29e" stroke="#0e0e0e" stroke-width="1.1"/><rect x="499.43" y="125.2" width="5" height="4" fill="#d8c0ba"/><path d="M505.98 130.4 L505.98 124.1 L509.98 120 L513.98 124.1 L513.98 130.4 Z" fill="#b0a29e" stroke="#0e0e0e" stroke-width="1.1"/><rect x="507.48" y="125.2" width="5" height="4" fill="#f4f4f4"/><path d="M509.98 113.9 V119.9" stroke="#0e0e0e" stroke-width="1" stroke-dasharray="1.6 1.2"/></svg>
<div style="position:absolute;left:441.4px;top:135.1px;width:39.2px;height:11.5px;background:#5c5d5c;border-radius:2.5px;"></div>
<div style="position:absolute;left:488.4px;top:135.1px;width:95.7px;height:11.5px;background:#5c5d5c;border-radius:2.5px;"></div>
<div style="position:absolute;left:360.2px;width:200px;text-align:center;top:134.85px;height:12px;line-height:12px;font-size:8.5px;letter-spacing:-0.15px;word-spacing:-0.5px;color:#d8d8d8;white-space:nowrap;">2</div>
<div style="position:absolute;left:497.2px;top:134.85px;height:12px;line-height:12px;font-size:8.5px;letter-spacing:-0.15px;word-spacing:-0.5px;color:#d8d8d8;white-space:nowrap;">Pos</div>
<div style="position:absolute;right:620.4px;top:134.85px;height:12px;line-height:12px;font-size:8.5px;letter-spacing:-0.15px;word-spacing:-0.5px;color:#d8d8d8;white-space:nowrap;">0.482</div>
<div style="position:absolute;left:441.4px;top:151.8px;width:142.7px;height:11.3px;background:#ffffff;border-radius:3px;"></div>
<div style="position:absolute;left:441.3px;top:167.9px;height:12px;line-height:12px;font-size:8.5px;letter-spacing:-0.15px;word-spacing:-0.5px;color:#d6d6d6;white-space:nowrap;">Fac</div>
<div style="position:absolute;right:608.3px;top:222.2px;height:12px;line-height:12px;font-size:8.5px;letter-spacing:-0.15px;word-spacing:-0.5px;color:#d6d6d6;white-space:nowrap;">Color</div>
<div style="position:absolute;right:608.3px;top:237.4px;height:12px;line-height:12px;font-size:8.5px;letter-spacing:-0.15px;word-spacing:-0.5px;color:#d6d6d6;white-space:nowrap;">Alpha</div>
<svg style="position:absolute;left:445.2px;top:262.1px" width="50" height="8"><path d="M1.3 4 H7.3 M4.3 1 V7" stroke="#b4c2c0" stroke-width="1"/><path d="M16.7 4 H23" stroke="#b4c2c0" stroke-width="1.1"/><path d="M36.2 2.2 L39.2 5.2 L42.2 2.2" stroke="#b4c2c0" stroke-width="1.3" fill="none"/></svg>
<div style="position:absolute;left:504.4px;top:261.2px;width:39.4px;height:10px;background:#262626;border-radius:3px;"></div>
<div style="position:absolute;left:544.4px;top:261.2px;width:41.1px;height:10px;background:#262626;border-radius:3px;"></div>
<div style="position:absolute;left:540.2px;top:261.2px;width:8px;height:10px;background:#262626;border-radius:0px;"></div>
<div style="position:absolute;left:543.8px;top:261.7px;width:0.6px;height:9px;background:#3a3a3a;border-radius:0px;"></div>
<div style="position:absolute;left:507.7px;top:259.9px;height:12px;line-height:12px;font-size:8.5px;letter-spacing:-0.15px;word-spacing:-0.5px;color:#d8d8d8;white-space:nowrap;">RGB</div>
<div style="position:absolute;left:548.7px;top:259.9px;height:12px;line-height:12px;font-size:8.5px;letter-spacing:-0.15px;word-spacing:-0.5px;color:#d8d8d8;white-space:nowrap;">Linear</div>
<svg style="position:absolute;left:537.2px;top:265.2px" width="5" height="4"><path d="M0.6 0.8 L2.4 2.6 L4.2 0.8" stroke="#cfcfcf" stroke-width="0.8" fill="none"/></svg>
<svg style="position:absolute;left:579.2px;top:265.2px" width="5" height="4"><path d="M0.6 0.8 L2.4 2.6 L4.2 0.8" stroke="#cfcfcf" stroke-width="0.8" fill="none"/></svg>
<div style="position:absolute;left:447.8px;top:275.4px;width:133.5px;height:14px;background:linear-gradient(to right,#eda070 1%,#f5bb8e 15%,#fcdcb8 33%,#feedd4 50%,#fdf0d8 100%);box-shadow:0 0 0 1.2px #0c0c0c;"></div>
<svg width="1194" height="510" style="position:absolute;left:0;top:0"><path d="M445 292.4 L445 286.1 L449 282 L453 286.1 L453 292.4 Z" fill="#b0a29e" stroke="#0e0e0e" stroke-width="1.1"/><rect x="446.5" y="287.2" width="5" height="4" fill="#dca084"/><path d="M449 275.9 V281.9" stroke="#0e0e0e" stroke-width="1" stroke-dasharray="1.6 1.2"/><path d="M497.44 292.4 L497.44 286.1 L501.44 282 L505.44 286.1 L505.44 292.4 Z" fill="#b0a29e" stroke="#0e0e0e" stroke-width="1.1"/><rect x="498.94" y="287.2" width="5" height="4" fill="#f6f0e8"/></svg>
<div style="position:absolute;left:442.8px;top:297.1px;width:39.2px;height:11.5px;background:#585a5d;border-radius:2.5px;"></div>
<div style="position:absolute;left:489.8px;top:297.1px;width:95.7px;height:11.5px;background:#585a5d;border-radius:2.5px;"></div>
<div style="position:absolute;left:361.6px;width:200px;text-align:center;top:296.85px;height:12px;line-height:12px;font-size:8.5px;letter-spacing:-0.15px;word-spacing:-0.5px;color:#d8d8d8;white-space:nowrap;">0</div>
<div style="position:absolute;left:498.6px;top:296.85px;height:12px;line-height:12px;font-size:8.5px;letter-spacing:-0.15px;word-spacing:-0.5px;color:#d8d8d8;white-space:nowrap;">Pos</div>
<div style="position:absolute;right:619px;top:296.85px;height:12px;line-height:12px;font-size:8.5px;letter-spacing:-0.15px;word-spacing:-0.5px;color:#d8d8d8;white-space:nowrap;">0.000</div>
<div style="position:absolute;left:442.8px;top:313.8px;width:142.7px;height:11.3px;background:#e9a06a;border-radius:3px;"></div>
<div style="position:absolute;left:442.7px;top:329.9px;height:12px;line-height:12px;font-size:8.5px;letter-spacing:-0.15px;word-spacing:-0.5px;color:#d6d6d6;white-space:nowrap;">Fac</div>
<div style="position:absolute;right:481.7px;top:135.5px;height:12px;line-height:12px;font-size:8.5px;letter-spacing:-0.15px;word-spacing:-0.5px;color:#d6d6d6;white-space:nowrap;">Color</div>
<div style="position:absolute;left:635.4px;top:156.3px;width:78.2px;height:11px;background:#2a2828;border-radius:4px;"></div>
<div style="position:absolute;left:639.7px;top:155.4px;height:12px;line-height:12px;font-size:8.5px;letter-spacing:-0.15px;word-spacing:-0.5px;color:#dedede;white-space:nowrap;">Multiply</div>
<svg style="position:absolute;left:706.3px;top:160.3px" width="5" height="4"><path d="M0.6 0.8 L2.4 2.6 L4.2 0.8" stroke="#cfcfcf" stroke-width="0.8" fill="none"/></svg>
<div style="position:absolute;left:635.7px;top:171.7px;width:8.6px;height:8.6px;background:#636363;border-radius:1.5px;box-shadow:0 0 0 1px rgba(0,0,0,0.38);"></div>
<div style="position:absolute;left:646.9px;top:170.1px;height:12px;line-height:12px;font-size:8.5px;letter-spacing:-0.15px;word-spacing:-0.5px;color:#d6d6d6;white-space:nowrap;">Clamp</div>
<div style="position:absolute;left:636.6px;top:187.1px;width:76.6px;height:10.9px;background:#575757;border-radius:2.5px;"></div>
<div style="position:absolute;left:636.6px;top:187.1px;width:41.5px;height:10.9px;background:#4c78c4;border-radius:2.5px 0 0 2.5px;"></div>
<div style="position:absolute;left:640.7px;top:186.4px;height:12px;line-height:12px;font-size:8.5px;letter-spacing:-0.15px;word-spacing:-0.5px;color:#e8e8e8;white-space:nowrap;">Fac</div>
<div style="position:absolute;right:487.6px;top:186.4px;height:12px;line-height:12px;font-size:8.5px;letter-spacing:-0.15px;word-spacing:-0.5px;color:#e8e8e8;white-space:nowrap;">0.567</div>
<div style="position:absolute;left:636px;top:201.4px;height:12px;line-height:12px;font-size:8.5px;letter-spacing:-0.15px;word-spacing:-0.5px;color:#d6d6d6;white-space:nowrap;">Color1</div>
<div style="position:absolute;left:636px;top:215.7px;height:12px;line-height:12px;font-size:8.5px;letter-spacing:-0.15px;word-spacing:-0.5px;color:#d6d6d6;white-space:nowrap;">Color2</div>
<div style="position:absolute;right:360.1px;top:136.1px;height:12px;line-height:12px;font-size:8.5px;letter-spacing:-0.15px;word-spacing:-0.5px;color:#d6d6d6;white-space:nowrap;">Color</div>
<div style="position:absolute;left:756.9px;top:156.9px;width:78.3px;height:11px;background:#2a2828;border-radius:4px;"></div>
<div style="position:absolute;left:761.2px;top:156px;height:12px;line-height:12px;font-size:8.5px;letter-spacing:-0.15px;word-spacing:-0.5px;color:#dedede;white-space:nowrap;">Mix</div>
<svg style="position:absolute;left:827.9px;top:160.9px" width="5" height="4"><path d="M0.6 0.8 L2.4 2.6 L4.2 0.8" stroke="#cfcfcf" stroke-width="0.8" fill="none"/></svg>
<div style="position:absolute;left:757.2px;top:172.3px;width:8.6px;height:8.6px;background:#636363;border-radius:1.5px;box-shadow:0 0 0 1px rgba(0,0,0,0.38);"></div>
<div style="position:absolute;left:768.4px;top:170.7px;height:12px;line-height:12px;font-size:8.5px;letter-spacing:-0.15px;word-spacing:-0.5px;color:#d6d6d6;white-space:nowrap;">Clamp</div>
<div style="position:absolute;left:757.5px;top:187px;height:12px;line-height:12px;font-size:8.5px;letter-spacing:-0.15px;word-spacing:-0.5px;color:#d6d6d6;white-space:nowrap;">Fac</div>
<div style="position:absolute;left:757.5px;top:202px;height:12px;line-height:12px;font-size:8.5px;letter-spacing:-0.15px;word-spacing:-0.5px;color:#d6d6d6;white-space:nowrap;">Color1</div>
<div style="position:absolute;left:757.5px;top:216.3px;height:12px;line-height:12px;font-size:8.5px;letter-spacing:-0.15px;word-spacing:-0.5px;color:#d6d6d6;white-space:nowrap;">Color2</div>
<div style="position:absolute;left:798.6px;top:217px;width:36.9px;height:11px;background:#6eb0f6;border-radius:3px;box-shadow:0 0 0 1.2px #1c2c48;"></div>
<div style="position:absolute;right:201px;top:128.2px;height:12px;line-height:12px;font-size:8.5px;letter-spacing:-0.15px;word-spacing:-0.5px;color:#d6d6d6;white-space:nowrap;">BSDF</div>
<div style="position:absolute;left:910px;top:145.2px;height:12px;line-height:12px;font-size:8.5px;letter-spacing:-0.15px;word-spacing:-0.5px;color:#d6d6d6;white-space:nowrap;">Color</div>
<div style="position:absolute;left:910.2px;top:160.4px;width:82.8px;height:10.6px;background:#4e4e4e;border-radius:3px;"></div>
<div style="position:absolute;left:915.5px;top:159.5px;height:12px;line-height:12px;font-size:8.5px;letter-spacing:-0.15px;word-spacing:-0.5px;color:#d8d8d8;white-space:nowrap;">Roughness</div>
<div style="position:absolute;right:207.3px;top:159.5px;height:12px;line-height:12px;font-size:8.5px;letter-spacing:-0.15px;word-spacing:-0.5px;color:#d8d8d8;white-space:nowrap;">0.000</div>
<div style="position:absolute;left:910px;top:173.8px;height:12px;line-height:12px;font-size:8.5px;letter-spacing:-0.15px;word-spacing:-0.5px;color:#d6d6d6;white-space:nowrap;">Normal</div>
<div style="position:absolute;left:1069.6px;top:110.2px;width:77.3px;height:10.2px;background:#262626;border-radius:3px;"></div>
<div style="position:absolute;left:1073px;top:109.2px;height:12px;line-height:12px;font-size:8.5px;letter-spacing:-0.15px;word-spacing:-0.5px;color:#dedede;white-space:nowrap;">All</div>
<svg style="position:absolute;left:1138.5px;top:114px" width="5" height="4"><path d="M0.6 0.8 L2.4 2.6 L4.2 0.8" stroke="#cfcfcf" stroke-width="0.8" fill="none"/></svg>
<div style="position:absolute;left:1069.5px;top:125.9px;height:12px;line-height:12px;font-size:8.5px;letter-spacing:-0.15px;word-spacing:-0.5px;color:#d6d6d6;white-space:nowrap;">Surface</div>
<div style="position:absolute;left:1069.5px;top:140.7px;height:12px;line-height:12px;font-size:8.5px;letter-spacing:-0.15px;word-spacing:-0.5px;color:#d6d6d6;white-space:nowrap;">Volume</div>
<div style="position:absolute;left:1069.5px;top:154.8px;height:12px;line-height:12px;font-size:8.5px;letter-spacing:-0.15px;word-spacing:-0.5px;color:#d6d6d6;white-space:nowrap;">Displacement</div>
<div style="position:absolute;right:473.5px;top:378.9px;height:12px;line-height:12px;font-size:8.5px;letter-spacing:-0.15px;word-spacing:-0.5px;color:#d6d6d6;white-space:nowrap;">Normal</div>
<div style="position:absolute;left:642.9px;top:401.2px;width:8.4px;height:8.2px;background:#5e5e5e;border-radius:1.5px;box-shadow:0 0 0 1px rgba(0,0,0,0.38);"></div>
<div style="position:absolute;left:654.5px;top:399.2px;height:12px;line-height:12px;font-size:8.5px;letter-spacing:-0.15px;word-spacing:-0.5px;color:#d6d6d6;white-space:nowrap;">Invert</div>
<div style="position:absolute;left:642.9px;top:416.2px;width:78.1px;height:10.3px;background:#4e4e4e;border-radius:3px;"></div>
<div style="position:absolute;left:642.9px;top:416.2px;width:3.1px;height:10.3px;background:#4772b3;border-radius:1px;"></div>
<div style="position:absolute;left:648.5px;top:415.2px;height:12px;line-height:12px;font-size:8.5px;letter-spacing:-0.15px;word-spacing:-0.5px;color:#d8d8d8;white-space:nowrap;">Strength</div>
<div style="position:absolute;right:479.6px;top:415.2px;height:12px;line-height:12px;font-size:8.5px;letter-spacing:-0.15px;word-spacing:-0.5px;color:#d8d8d8;white-space:nowrap;">0.067</div>
<div style="position:absolute;left:642.9px;top:430.4px;width:78.1px;height:10.3px;background:#4e4e4e;border-radius:3px;"></div>
<div style="position:absolute;left:652.5px;top:429.4px;height:12px;line-height:12px;font-size:8.5px;letter-spacing:-0.15px;word-spacing:-0.5px;color:#d8d8d8;white-space:nowrap;">Distance</div>
<div style="position:absolute;right:483.3px;top:429.4px;height:12px;line-height:12px;font-size:8.5px;letter-spacing:-0.15px;word-spacing:-0.5px;color:#d8d8d8;white-space:nowrap;">0.100</div>
<div style="position:absolute;left:643.5px;top:442.8px;height:12px;line-height:12px;font-size:8.5px;letter-spacing:-0.15px;word-spacing:-0.5px;color:#d6d6d6;white-space:nowrap;">Height</div>
<div style="position:absolute;left:643.5px;top:456.6px;height:12px;line-height:12px;font-size:8.5px;letter-spacing:-0.15px;word-spacing:-0.5px;color:#d6d6d6;white-space:nowrap;">Normal</div>
<svg width="1194" height="510" style="position:absolute;left:0;top:0"><circle cx="201.5" cy="241.5" r="3.1" fill="#ccce5e" stroke="rgba(0,0,0,0.8)" stroke-width="1"/><circle cx="201.5" cy="256.3" r="3.1" fill="#ccce5e" stroke="rgba(0,0,0,0.8)" stroke-width="1"/><circle cx="201.5" cy="271.0" r="3.1" fill="#ccce5e" stroke="rgba(0,0,0,0.8)" stroke-width="1"/><circle cx="397.0" cy="80.0" r="3.1" fill="#ccce5e" stroke="rgba(0,0,0,0.8)" stroke-width="1"/><circle cx="304.3" cy="116.2" r="3.1" fill="#ccce5e" stroke="rgba(0,0,0,0.8)" stroke-width="1"/><circle cx="394.3" cy="166.4" r="3.1" fill="#ccce5e" stroke="rgba(0,0,0,0.8)" stroke-width="1"/><circle cx="301.5" cy="203.2" r="3.1" fill="#ccce5e" stroke="rgba(0,0,0,0.8)" stroke-width="1"/><circle cx="591.8" cy="66.4" r="3.1" fill="#ccce5e" stroke="rgba(0,0,0,0.8)" stroke-width="1"/><circle cx="591.8" cy="81.6" r="3.1" fill="#a3a3a3" stroke="rgba(0,0,0,0.8)" stroke-width="1"/><circle cx="433.0" cy="174.0" r="3.1" fill="#a3a3a3" stroke="rgba(0,0,0,0.8)" stroke-width="1"/><circle cx="593.0" cy="228.39999999999998" r="3.1" fill="#ccce5e" stroke="rgba(0,0,0,0.8)" stroke-width="1"/><circle cx="593.0" cy="243.6" r="3.1" fill="#a3a3a3" stroke="rgba(0,0,0,0.8)" stroke-width="1"/><circle cx="434.4" cy="336.0" r="3.1" fill="#a3a3a3" stroke="rgba(0,0,0,0.8)" stroke-width="1"/><circle cx="720.8" cy="141.4" r="3.1" fill="#ccce5e" stroke="rgba(0,0,0,0.8)" stroke-width="1"/><circle cx="628.2" cy="192.39999999999998" r="3.1" fill="#a3a3a3" stroke="rgba(0,0,0,0.8)" stroke-width="1"/><circle cx="628.2" cy="207.39999999999998" r="3.1" fill="#ccce5e" stroke="rgba(0,0,0,0.8)" stroke-width="1"/><circle cx="628.2" cy="221.7" r="3.1" fill="#ccce5e" stroke="rgba(0,0,0,0.8)" stroke-width="1"/><circle cx="842.4" cy="142.0" r="3.1" fill="#ccce5e" stroke="rgba(0,0,0,0.8)" stroke-width="1"/><circle cx="749.7" cy="193.0" r="3.1" fill="#a3a3a3" stroke="rgba(0,0,0,0.8)" stroke-width="1"/><circle cx="749.7" cy="208.0" r="3.1" fill="#ccce5e" stroke="rgba(0,0,0,0.8)" stroke-width="1"/><circle cx="749.7" cy="222.3" r="3.1" fill="#ccce5e" stroke="rgba(0,0,0,0.8)" stroke-width="1"/><circle cx="1000.8" cy="134.3" r="3.1" fill="#72c472" stroke="rgba(0,0,0,0.8)" stroke-width="1"/><circle cx="901.8" cy="151.4" r="3.1" fill="#ccce5e" stroke="rgba(0,0,0,0.8)" stroke-width="1"/><circle cx="901.8" cy="165.7" r="3.1" fill="#a3a3a3" stroke="rgba(0,0,0,0.8)" stroke-width="1"/><circle cx="901.8" cy="180.0" r="3.1" fill="#6a68c6" stroke="rgba(0,0,0,0.8)" stroke-width="1"/><circle cx="1061.6" cy="132.1" r="3.1" fill="#72c472" stroke="rgba(0,0,0,0.8)" stroke-width="1"/><circle cx="1061.6" cy="146.9" r="3.1" fill="#72c472" stroke="rgba(0,0,0,0.8)" stroke-width="1"/><circle cx="1061.6" cy="161.0" r="3.1" fill="#6a68c6" stroke="rgba(0,0,0,0.8)" stroke-width="1"/><circle cx="728.6" cy="385.1" r="3.1" fill="#6a68c6" stroke="rgba(0,0,0,0.8)" stroke-width="1"/><circle cx="635.3" cy="421.1" r="3.1" fill="#a3a3a3" stroke="rgba(0,0,0,0.8)" stroke-width="1"/><circle cx="635.3" cy="435.1" r="3.1" fill="#a3a3a3" stroke="rgba(0,0,0,0.8)" stroke-width="1"/><circle cx="635.3" cy="449.0" r="3.1" fill="#a3a3a3" stroke="rgba(0,0,0,0.8)" stroke-width="1"/><circle cx="635.3" cy="462.8" r="3.1" fill="#6a68c6" stroke="rgba(0,0,0,0.8)" stroke-width="1"/></svg>
<div style="position:absolute;left:33.2px;top:481px;height:12px;line-height:12px;font-size:11px;letter-spacing:-0.2px;word-spacing:0px;color:#e2e2e2;white-space:nowrap;">Procedural Painted Material w BSDF</div>
</body></html>
